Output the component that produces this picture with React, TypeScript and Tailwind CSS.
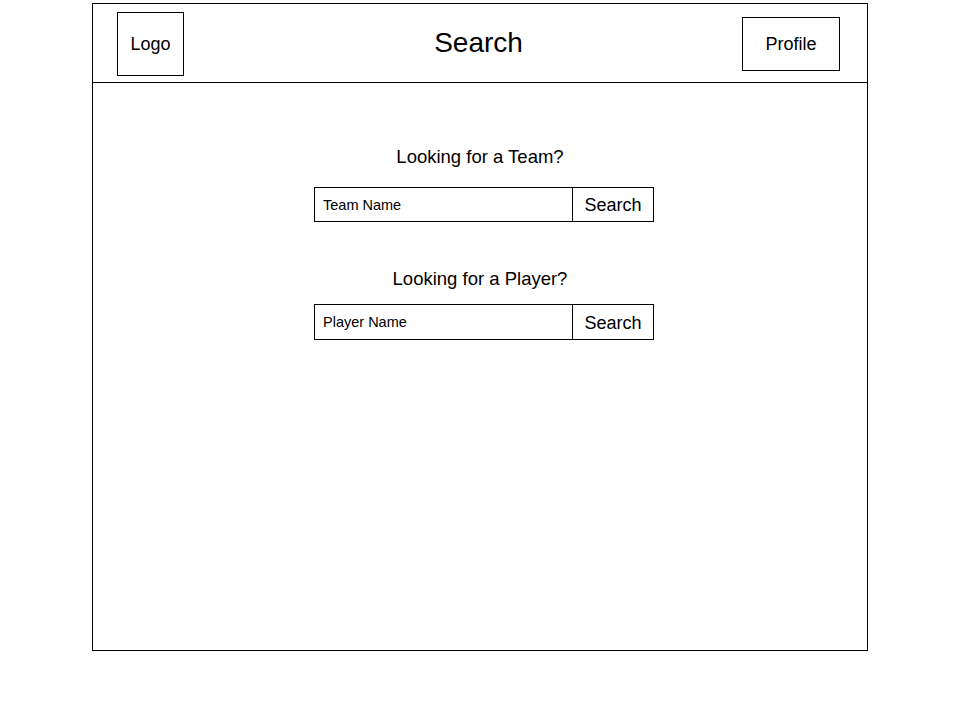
const SearchRow = ({ placeholder, height }: { placeholder: string; height: string }) => {
    return (
        <div className={`ml-[8px] flex w-[340px] border border-black ${height}`}>
            <input
                className="min-w-0 flex-1 bg-transparent pl-[8px] pt-[2px] text-[14.5px] text-black outline-none placeholder:text-black"
                placeholder={placeholder}
            />
            <button className="w-[81px] border-l border-black pt-[2px] text-[18px] text-black">
                Search
            </button>
        </div>
    );
};

export default function App() {
    return (
        <div className="min-h-[720px] bg-white pt-[3px] font-['Liberation_Sans',Arial,sans-serif] text-black">
            <div className="mx-auto flex h-[648px] w-[776px] flex-col border border-black">
                <header className="flex h-[79px] items-center border-b border-black pl-[24px] pr-[27px] pt-[2px]">
                    <div className="flex flex-1">
                        <div className="flex h-[64px] w-[67px] items-center justify-center border border-black pt-[1px] text-[18px]">
                            Logo
                        </div>
                    </div>
                    <h1 className="mb-[2px] text-[28px] leading-[32px]">Search</h1>
                    <div className="flex flex-1 justify-end">
                        <div className="flex h-[54px] w-[98px] items-center justify-center border border-black pt-[1px] text-[18px]">
                            Profile
                        </div>
                    </div>
                </header>

                <main className="flex flex-1 flex-col items-center pt-[64px]">
                    <h2 className="text-[18.5px] leading-[20px]">Looking for a Team?</h2>
                    <div className="mt-[20px]">
                        <SearchRow placeholder="Team Name" height="h-[35px]" />
                    </div>

                    <h2 className="mt-[47px] text-[18.5px] leading-[20px]">Looking for a Player?</h2>
                    <div className="mt-[15px]">
                        <SearchRow placeholder="Player Name" height="h-[36px]" />
                    </div>
                </main>
            </div>
        </div>
    );
}
